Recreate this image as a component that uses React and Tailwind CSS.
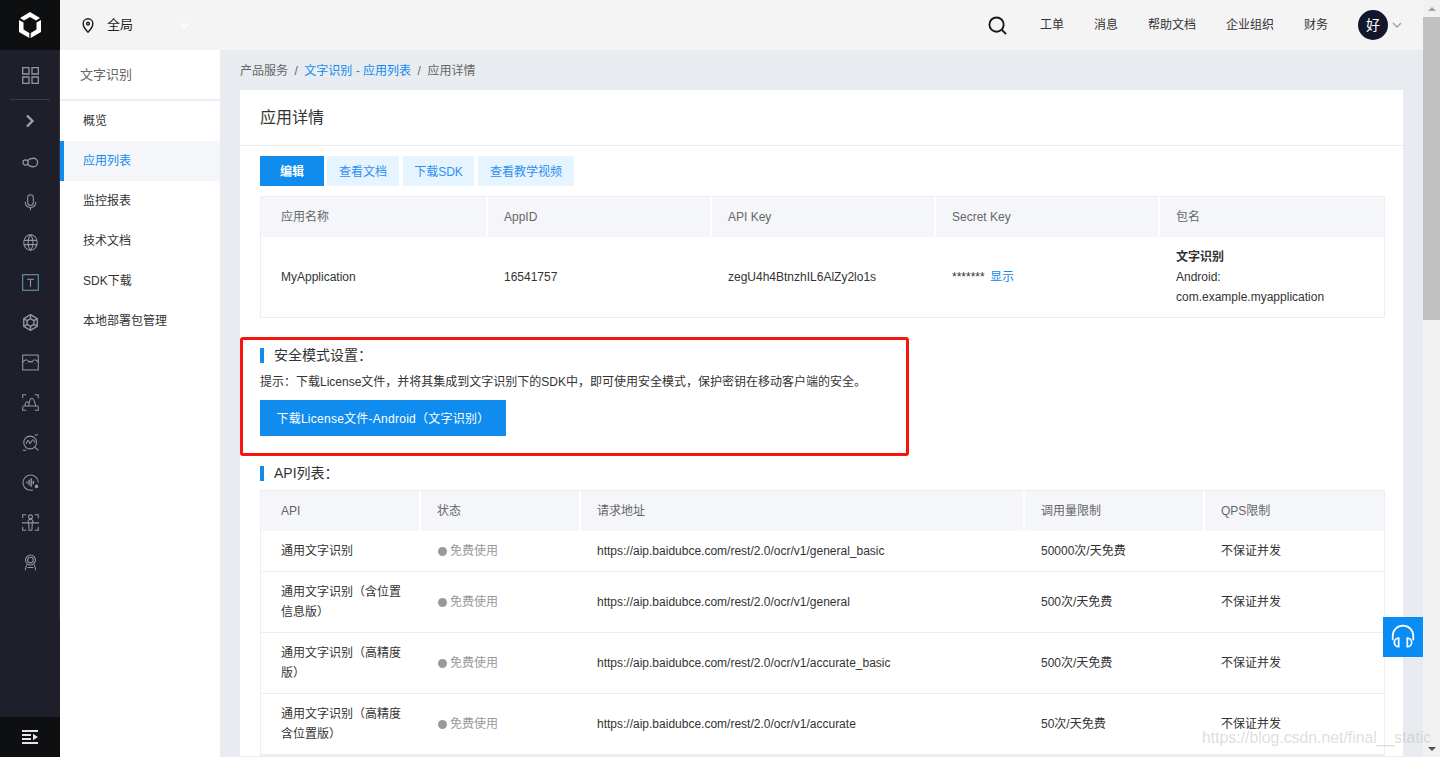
const railIcons = [
  // infinity
  <g key="a" strokeWidth="1.800"><circle cx="5" cy="12" r="3.600" /><path d="M7.500 9.500C10 7 12.500 6 16 6a6 6 0 0 1 0 12c-3.500 0-6-1-8.500-3.500" /></g>,
  // mic
  <g key="b"><rect x="8" y="1" width="8" height="15" rx="4" /><path d="M4.500 11c0 5 3 8 7.500 8s7.500-3 7.500-8M12 19v4" /></g>,
  // globe
  <g key="c"><ellipse cx="12" cy="12" rx="9.500" ry="11" /><path d="M2.500 9h19M2.500 15h19M12 1c-2.500 3-3.500 6.500-3.500 11s1 8 3.500 11c2.500-3 3.500-6.500 3.500-11S14.500 4 12 1z" /></g>,
  // T box
  <g key="d"><rect x="1" y="1" width="22" height="22" stroke="#6a9aaa" /><path d="M7 7.500h10M12 7.500V18" /></g>,
  // hexagon
  <g key="e" strokeWidth="2"><path d="M12 1l9.500 5.500v11L12 23l-9.500-5.500v-11z" /><path d="M12 6.500l4.800 2.800v5.400L12 17.500l-4.800-2.800V9.300z" /><path d="M12 1v5.500M21.500 6.500l-4.700 2.800M21.500 17.500l-4.700-2.800M12 23v-5.500M2.500 17.500l4.700-2.800M2.500 6.500l4.700 2.800" /></g>,
  // image wave
  <g key="f"><rect x="1" y="1.500" width="22" height="21" /><path d="M1 12c1.500-3 3-4 5-4s3 1.500 4 3.500c1-1 3-1 4 0 1-2 2-3.500 4-3.500s3.500 1 5 4" /><path d="M6 13.500v.5M18 13.500v.5" /></g>,
  // scan wave
  <g key="g"><path d="M1 6V1h5M18 1h5v5M1 18v5h5M18 23h5v-5M1 17h22" /><path d="M4 17c.5-4 2-6 3.500-6s2.500 2 3 3.500M9.500 17c.5-5 1.500-11 4.500-11s4 6 5.500 11" /></g>,
  // magnifier wave
  <g key="h"><circle cx="11.500" cy="12" r="9" /><path d="M18 18.500l5 4.500M18 1.500l4.500-.5M1 23h5M6 14c1-5 3-6 4-3s1.500 3 3 0 3-5 5 1" /></g>,
  // audio circle
  <g key="i"><path d="M15.500 22.500A10.800 10.800 0 1 1 23 12" /><path d="M7 10.500v3M10 8v8M13 6v12M16 9.500v5" strokeWidth="2" /><circle cx="20.500" cy="17.500" r="1.800" fill="#9496a0" /></g>,
  // body scan
  <g key="j"><path d="M1 6V1h5M18 1h5v5M1 18v5h5M18 23h5v-5M0 12.500h24" /><circle cx="12" cy="4" r="2.800" /><path d="M8.500 12.500c0-3 1-5 3.500-5s3.500 2 3.500 5M9.500 12.500l.5 10.500h4l.5-10.500" /></g>,
  // robot badge
  <g key="k"><circle cx="12" cy="8.500" r="7" /><circle cx="12" cy="8.500" r="4" /><path d="M7 15c-1 2-2 4.500-2.500 8M17 15c1 2 2 4.500 2.500 8M8 19h8" /></g>,
];

const subNav = ["概览", "应用列表", "监控报表", "技术文档", "SDK下载", "本地部署包管理"];
const topLinks = ["工单", "消息", "帮助文档", "企业组织", "财务"];

const apiRows = [
  { name: "通用文字识别", url: "https://aip.baidubce.com/rest/2.0/ocr/v1/general_basic", limit: "50000次/天免费", h: "h-[41px]" },
  { name: "通用文字识别（含位置信息版）", url: "https://aip.baidubce.com/rest/2.0/ocr/v1/general", limit: "500次/天免费", h: "h-[61px]" },
  { name: "通用文字识别（高精度版）", url: "https://aip.baidubce.com/rest/2.0/ocr/v1/accurate_basic", limit: "500次/天免费", h: "h-[61px]" },
  { name: "通用文字识别（高精度含位置版）", url: "https://aip.baidubce.com/rest/2.0/ocr/v1/accurate", limit: "50次/天免费", h: "h-[61px]" },
];

function SectionTitle({ children }) {
  return (
    <div className="flex items-center gap-2.5 text-[14px] leading-[16px] text-[#333]">
      <span className="h-[15px] w-1 bg-[#108cee]"></span>
      {children}
    </div>
  );
}

export default function App() {
  return (
    <div className="relative flex h-[757px] w-[1440px] overflow-hidden bg-[#e8ebf0] text-[12px] text-[#333] [font-family:'Liberation_Sans','Noto_Sans_CJK_SC',sans-serif]">
      {/* left rail */}
      <aside className="flex w-[60px] shrink-0 flex-col bg-[#1e1f2b]">
        <div className="flex h-[50px] items-center justify-center bg-[#0e0f11]">
          <svg viewBox="0 0 22 26" className="h-[26px] w-[22px]" fill="#fff">
            <path d="M11 0l10 6-4 2.500-6-3.500-6 3.500-4-2.500z" />
            <path d="M0 8l4.500 2.500v7l5.800 3.500v5L0 20z" />
            <path d="M22 8l-4.500 2.500v7L11.700 21v5L22 20z" />
          </svg>
        </div>
        <div className="flex h-[570px] flex-col items-center border-r border-[#30313d] pl-px">
          <div className="flex h-[50px] w-[40px] items-center justify-center border-b border-[#3a3b47] pt-px">
            <svg viewBox="0 0 17 17" className="h-[17px] w-[17px]" fill="none" stroke="#9496a0" strokeWidth="1.300">
              <path d="M.7.700h6.300V7H.7zM10 .700h6.300V7H10zM.7 10H7v6.300H.7zM10 10h6.300v6.300H10z" />
            </svg>
          </div>
          <div className="flex h-[42px] items-center justify-center">
            <svg viewBox="0 0 10 14" className="h-3.5 w-2.5" fill="none" stroke="#a3a5ad" strokeWidth="2.200">
              <path d="M2 1.500L7.500 7 2 12.500" />
            </svg>
          </div>
          {railIcons.map((icon, i) => (
            <div key={i} className="flex h-10 items-center justify-center">
              <svg viewBox="0 0 24 24" className="h-[17px] w-[17px]" fill="none" stroke="#9496a0" strokeWidth="1.500">
                {icon}
              </svg>
            </div>
          ))}
        </div>
        <div className="flex-1"></div>
        <div className="flex h-10 items-center justify-center bg-[#0e0f11]">
          <svg viewBox="0 0 16 14" className="h-3.5 w-4" fill="#e4e4e6">
            <path d="M0 0h16v2H0zM0 12h16v2H0zM0 4h9v2H0zM0 8h9v2H0zM11 3.800L16 7l-5 3.200z" />
          </svg>
        </div>
      </aside>

      <div className="flex min-w-0 flex-1 flex-col">
        {/* top bar */}
        <header className="flex h-[50px] shrink-0 items-center bg-[#f4f4f5] pl-[22px] pr-[21px] text-[#333]">
          <svg viewBox="0 0 14 18" className="h-[15px] w-3" fill="none" stroke="#222" strokeWidth="1.800">
            <path d="M7 1a5.800 5.800 0 0 0-5.800 5.800C1.200 11 7 17 7 17s5.800-6 5.800-10.200A5.800 5.800 0 0 0 7 1z" />
            <circle cx="7" cy="6.800" r="1.600" />
          </svg>
          <span className="ml-[13px] text-[13px] text-[#222]">全局</span>
          <svg viewBox="0 0 10 6" className="ml-[47px] h-1.5 w-2.5" fill="none" stroke="#fff" strokeWidth="1.500">
            <path d="M1 1l4 4 4-4" />
          </svg>
          <div className="ml-auto flex items-center gap-[30px]">
            <svg viewBox="0 0 20 20" className="mr-[3px] h-[19px] w-[19px]" fill="none" stroke="#1a1a1a" strokeWidth="2">
              <circle cx="9" cy="9" r="7.500" />
              <path d="M14.500 14.500L19 19" />
            </svg>
            {topLinks.map((t) => (
              <span key={t}>{t}</span>
            ))}
            <div className="flex items-center gap-[4px]">
              <span className="flex h-[30px] w-[30px] items-center justify-center rounded-full bg-[#12172b] text-[14px] text-white">好</span>
              <svg viewBox="0 0 10 6" className="h-1.5 w-2.5" fill="none" stroke="#a5a5a5" strokeWidth="1.500">
                <path d="M1 1l4 4 4-4" />
              </svg>
            </div>
          </div>
        </header>

        <div className="flex min-h-0 flex-1">
          {/* product sub navigation */}
          <nav className="w-40 shrink-0 bg-white">
            <div className="flex h-[50px] items-center border-b border-[#eaeef5] pl-5 text-[13px] text-[#666]">文字识别</div>
            <div className="h-px bg-[#eaeef5]"></div>
            {subNav.map((item) => (
              <div
                key={item}
                className={
                  item === "应用列表"
                    ? "flex h-10 items-center border-l-4 border-[#108cee] bg-[#f5f6fa] pl-[19px] text-[#108cee]"
                    : "flex h-10 items-center pl-[23px] text-[#333]"
                }
              >
                {item}
              </div>
            ))}
          </nav>

          {/* main */}
          <main className="min-w-0 flex-1 px-5">
            <div className="flex h-10 items-center gap-[6.5px] pt-px text-[#666]">
              <span>产品服务</span>
              <span>/</span>
              <span className="text-[#108cee]">文字识别 - 应用列表</span>
              <span>/</span>
              <span>应用详情</span>
            </div>

            <section className="bg-white">
              <h1 className="flex h-[56px] items-center border-b border-[#eaeaea] pl-5 pt-px text-[16px] font-normal text-[#333]">应用详情</h1>

              <div className="px-5">
                <div className="flex gap-1 pt-2.5">
                  <button className="h-[30px] w-16 bg-[#108cee] pt-px font-bold text-white">编辑</button>
                  <button className="ml-[-1px] h-[30px] w-[72px] bg-[#e6f4ff] pt-px text-[#2d8ff0]">查看文档</button>
                  <button className="h-[30px] w-[71px] bg-[#e6f4ff] pt-px text-[#2d8ff0]">下载SDK</button>
                  <button className="h-[30px] w-[96px] bg-[#e6f4ff] pt-px text-[#2d8ff0]">查看教学视频</button>
                </div>

                <table className="mt-2.5 w-[1125px] table-fixed border-separate border-spacing-0 border border-[#eceef4] text-left">
                  <colgroup>
                    <col className="w-[227px]" />
                    <col className="w-[224px]" />
                    <col className="w-[224px]" />
                    <col className="w-[224px]" />
                    <col />
                  </colgroup>
                  <thead>
                    <tr className="h-10 bg-[#f5f6fa] text-[#666]">
                      <th className="border-r-2 border-white pl-5 font-normal">应用名称</th>
                      <th className="border-r-2 border-white pl-4 font-normal">AppID</th>
                      <th className="border-r-2 border-white pl-4 font-normal">API Key</th>
                      <th className="border-r-2 border-white pl-4 font-normal">Secret Key</th>
                      <th className="pl-4 font-normal">包名</th>
                    </tr>
                  </thead>
                  <tbody>
                    <tr className="h-20">
                      <td className="pl-5">MyApplication</td>
                      <td className="pl-4">16541757</td>
                      <td className="pl-4">zegU4h4BtnzhIL6AlZy2lo1s</td>
                      <td className="pl-4">
                        ******* <span className="ml-[2px] text-[#108cee]">显示</span>
                      </td>
                      <td className="pl-4 leading-5">
                        <div className="font-bold">文字识别</div>
                        <div>Android:</div>
                        <div>com.example.myapplication</div>
                      </td>
                    </tr>
                  </tbody>
                </table>

                {/* security mode, the red frame is an annotation over the page */}
                <div className="relative pt-[29px]">
                  <div className="pointer-events-none absolute left-[-20px] top-[19px] h-[119px] w-[669px] rounded-[3px] border-[3px] border-[#f5150d]"></div>
                  <SectionTitle>安全模式设置：</SectionTitle>
                  <p className="mt-[11px] leading-[16px]">提示：下载License文件，并将其集成到文字识别下的SDK中，即可使用安全模式，保护密钥在移动客户端的安全。</p>
                  <button className="mt-[10px] block h-9 w-[246px] bg-[#108cee] pt-px text-[12px] tracking-[0.26px] text-white">下载License文件-Android（文字识别）</button>
                </div>

                <div className="pt-[29px]">
                  <SectionTitle>API列表：</SectionTitle>
                </div>

                <table className="mt-[9px] w-[1125px] table-fixed border-separate border-spacing-0 border border-[#eceef4] text-left">
                  <colgroup>
                    <col className="w-[160px]" />
                    <col className="w-[160px]" />
                    <col className="w-[444px]" />
                    <col className="w-[180px]" />
                    <col />
                  </colgroup>
                  <thead>
                    <tr className="h-10 bg-[#f5f6fa] text-[#666]">
                      <th className="border-r-2 border-white pl-5 font-normal">API</th>
                      <th className="border-r-2 border-white pl-4 font-normal">状态</th>
                      <th className="border-r-2 border-white pl-4 font-normal">请求地址</th>
                      <th className="border-r-2 border-white pl-4 font-normal">调用量限制</th>
                      <th className="pl-4 font-normal">QPS限制</th>
                    </tr>
                  </thead>
                  <tbody>
                    {apiRows.map((row) => (
                      <tr key={row.url} className={row.h}>
                        <td className="border-b border-[#eceef4] pl-5 pr-5 leading-5">{row.name}</td>
                        <td className="border-b border-[#eceef4] pl-[17px] text-[#999]">
                          <span className="flex items-center gap-[3px]">
                            <span className="h-[9px] w-[9px] rounded-full bg-[#999]"></span>
                            免费使用
                          </span>
                        </td>
                        <td className="border-b border-[#eceef4] pl-4">{row.url}</td>
                        <td className="border-b border-[#eceef4] pl-4">{row.limit}</td>
                        <td className="border-b border-[#eceef4] pl-4">不保证并发</td>
                      </tr>
                    ))}
                  </tbody>
                </table>
              </div>
            </section>
          </main>
        </div>
      </div>

      {/* browser scrollbar */}
      <div className="flex w-[17px] shrink-0 flex-col bg-[#f1f1f1]">
        <div className="flex h-[17px] items-center justify-center">
          <span className="h-0 w-0 border-x-[4px] border-b-[4px] border-x-transparent border-b-[#a3a3a3]"></span>
        </div>
        <div className="h-[303px] bg-[#c1c1c1]"></div>
        <div className="flex-1"></div>
        <div className="flex h-[17px] items-center justify-center">
          <span className="h-0 w-0 border-x-[4px] border-t-[4px] border-x-transparent border-t-[#505050]"></span>
        </div>
      </div>

      {/* floating help button */}
      <div className="absolute left-[1383px] top-[617px] flex h-10 w-10 items-center justify-center bg-[#0a8cf5]">
        <svg viewBox="0 0 24 24" className="h-[26px] w-[26px]" fill="none" stroke="#fff" strokeWidth="1.600">
          <path d="M2.500 15v-4a9.500 9.500 0 0 1 19 0v4" />
          <path d="M8 13v8a4 4 0 0 1 0-8zM16 13v8a4 4 0 0 0 0-8z" />
        </svg>
      </div>

      {/* csdn watermark */}
      <div className="absolute left-[1202px] top-[728px] text-[15.8px] leading-5 text-[#b4b4b4]/45">https://blog.csdn.net/final__static</div>
    </div>
  );
}
